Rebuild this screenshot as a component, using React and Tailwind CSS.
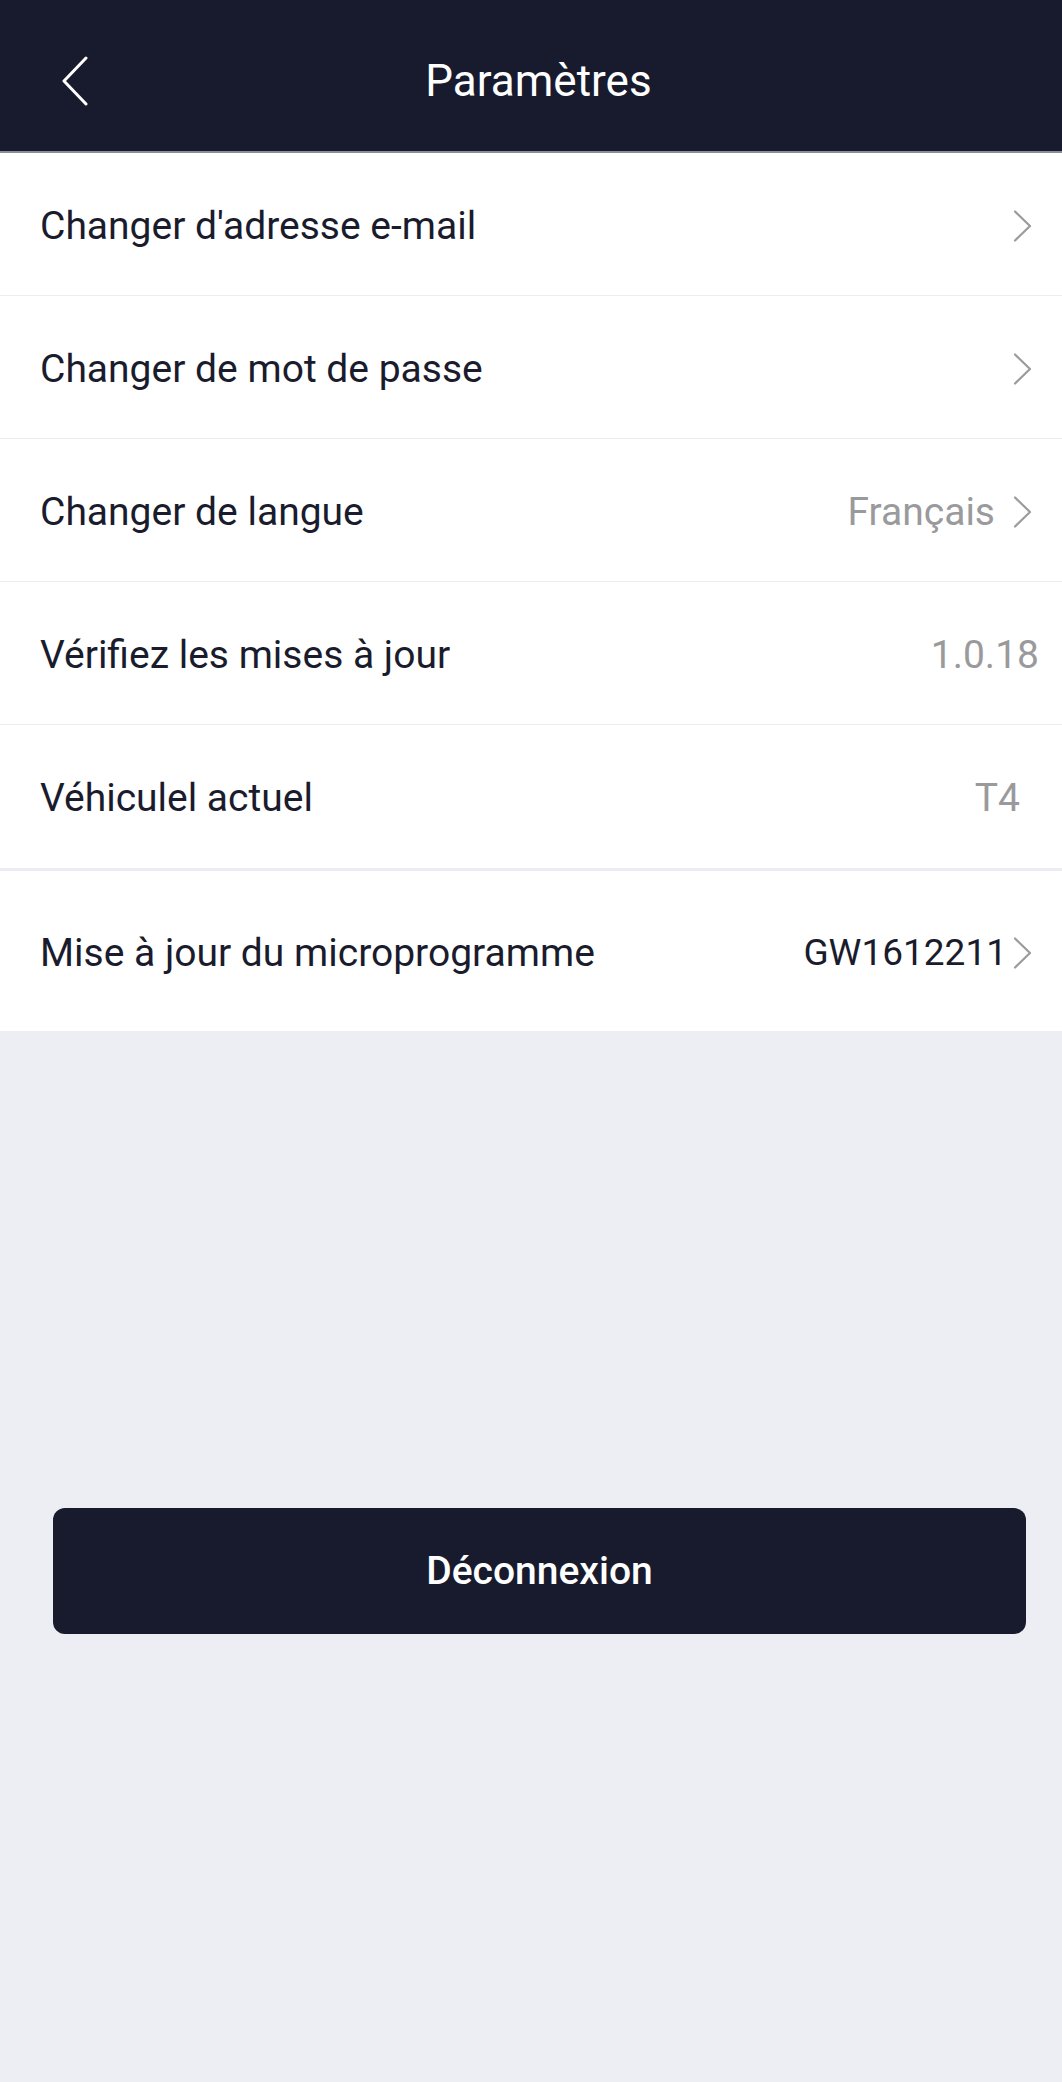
import React from "react";

const Chevron = () => (
  <svg width="20" height="32" viewBox="0 0 20 32" fill="none" className="shrink-0">
    <path d="M2 1.5 L17 16 L2 30.5" stroke="#9a9a9f" strokeWidth="2.2" strokeLinecap="round" strokeLinejoin="round" />
  </svg>
);

const rows = [
  { label: "Changer d'adresse e-mail", arrow: true },
  { label: "Changer de mot de passe", arrow: true },
  { label: "Changer de langue", value: "Français", arrow: true },
  { label: "Vérifiez les mises à jour", value: "1.0.18", pr: "pr-[23px]" },
  { label: "Véhiculel actuel", value: "T4", pr: "pr-[42px]" },
];

export default function App() {
  return (
    <div
      className="min-h-[2082px] w-[1062px] bg-[#edeef3] flex flex-col"
      style={{ fontFamily: "Roboto, 'Noto Sans', sans-serif" }}
    >
      {/* Header */}
      <div className="h-[151px] bg-[#181b2e] flex items-center relative">
        <svg width="30" height="50" viewBox="0 0 30 50" fill="none" className="absolute left-[60px] top-[56px]">
          <path d="M26 2 L4 25 L26 48" stroke="#fff" strokeWidth="3" strokeLinecap="round" strokeLinejoin="round" />
        </svg>
        <h1 className="flex-1 text-center text-white text-[44px] leading-none pt-[10px] pl-[15px]">Paramètres</h1>
      </div>
      <div className="h-[2px] bg-[#8b8d98]" />

      {/* List */}
      <div className="bg-white">
        {rows.map((r, i) => (
          <div
            key={i}
            className={`h-[143px] flex items-center justify-between pl-[40px] pt-[4px] ${r.pr || "pr-[29px]"} ${
              i < rows.length - 1 ? "border-b border-[#ededf0]" : ""
            }`}
          >
            <span className="text-[39px] text-[#1a1c2e]">{r.label}</span>
            <div className="flex items-center gap-[18px]">
              {r.value && <span className="text-[39px] text-[#9a9a9d]">{r.value}</span>}
              {r.arrow && <Chevron />}
            </div>
          </div>
        ))}
      </div>
      <div className="h-[3px] bg-[#ececf2]" />
      <div className="h-[160px] bg-white flex items-center justify-between pl-[40px] pr-[29px] pt-[4px]">
        <span className="text-[39px] text-[#1a1c2e]">Mise à jour du microprogramme</span>
        <div className="flex items-center gap-[6px]">
          <span className="text-[37px] text-[#1a1c2e]">GW1612211</span>
          <Chevron />
        </div>
      </div>

      {/* Logout */}
      <div className="pl-[53px] pr-[36px] pt-[477px]">
        <button className="w-full h-[126px] rounded-[12px] bg-[#181b2e] text-white text-[39px] font-medium">
          Déconnexion
        </button>
      </div>
    </div>
  );
}
